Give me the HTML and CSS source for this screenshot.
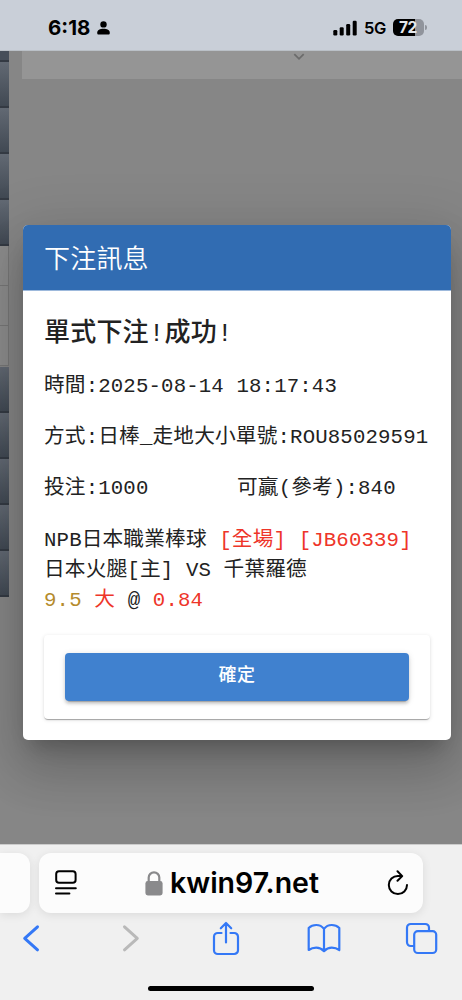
FILE: index.html
```html
<!DOCTYPE html>
<html lang="zh-Hant">
<head>
    <meta charset="UTF-8">
    <meta name="viewport" content="width=device-width, initial-scale=1.0">
    <title>下注訊息</title>
    <link rel="stylesheet" href="styles.css">
</head>
<body>
    <div class="status-bar">
        <div class="status-left">
            <span class="time">6:18</span>
            <svg width="13" height="14" viewBox="0 0 13 14">
                <circle cx="6.5" cy="3.4" r="3.2" />
                <path d="M0.2 11.7C0.2 9.3 3 7.8 6.5 7.8s6.3 1.5 6.3 3.9c0 1.4-.5 1.9-1.6 1.9H1.8C.7 13.6.2 13.1.2 11.7z" />
            </svg>
        </div>
        <div class="status-right">
            <svg class="signal" width="25" height="16" viewBox="0 0 25 16">
                <rect x="0.3" y="10" width="4" height="5.5" rx="1.2" />
                <rect x="6.7" y="7.3" width="4" height="8.2" rx="1.2" />
                <rect x="13.2" y="4" width="4" height="11.5" rx="1.2" />
                <rect x="19.7" y="0.7" width="4" height="14.8" rx="1.2" />
            </svg>
            <span class="network">5G</span>
            <div class="battery"><span>72</span></div>
        </div>
    </div>

    <div class="viewport">
        <div class="sidebar">
            <div class="menu first"></div>
            <div class="menu"></div>
            <div class="menu"></div>
            <div class="menu"></div>
            <div class="menu"></div>
            <div class="sub"></div>
            <div class="sub"></div>
            <div class="sub"></div>
            <div class="menu"></div>
            <div class="menu"></div>
            <div class="menu"></div>
            <div class="menu"></div>
            <div class="menu"></div>
        </div>
        <div class="panel">
            <svg width="12" height="8" viewBox="0 0 12 8"><path d="M1.3 1.2 6 5.8l4.7-4.6" fill="none" stroke="#6c6c6c" stroke-width="1.8" /></svg>
        </div>

        <div class="overlay">
            <div class="dialog">
                <div class="dialog-title">下注訊息</div>
                <div class="dialog-body">
                    <h1>單式下注!成功!</h1>
                    <p>時間:2025-08-14 18:17:43</p>
                    <p>方式:日棒_走地大小單號:ROU85029591</p>
                    <p class="split"><span>投注:1000</span><span>可贏(參考):840</span></p>
                    <p>NPB日本職業棒球 <span class="red">[全場] [JB60339]</span><br>
                    日本火腿[主] VS 千葉羅德<br>
                    <span class="gold">9.5</span> <span class="red">大</span> @ <span class="red">0.84</span></p>
                    <div class="actions">
                        <button class="btn">確定</button>
                    </div>
                </div>
            </div>
        </div>
    </div>

    <div class="browser-bar">
        <div class="tabs">
            <div class="tab-prev"></div>
            <div class="address">
                <svg width="22" height="26" viewBox="0 0 22 26" fill="none" stroke="#000" stroke-width="2" stroke-linecap="round">
                    <rect x="1.2" y="1.2" width="19.4" height="11.6" rx="2.8" />
                    <path d="M1 18.2h19.8M1 23.6h13.4" />
                </svg>
                <div class="host">
                    <svg width="18" height="25" viewBox="0 0 18 25">
                        <path d="M3.7 11V6.6a5.3 5.3 0 0 1 10.6 0V11" fill="none" stroke="#8a8a8c" stroke-width="2.2" />
                        <rect x="0.4" y="10" width="17.2" height="14.4" rx="2.4" fill="#8a8a8c" />
                    </svg>
                    <span>kwin97.net</span>
                </div>
                <svg width="22" height="26" viewBox="0 0 22 26" fill="none" stroke="#000" stroke-width="2" stroke-linecap="round" stroke-linejoin="round">
                    <path d="M20 15A9.1 9.1 0 1 1 10.9 5.9H14.7M10.5 1.3l4.7 4.8-4.7 4.7" />
                </svg>
            </div>
        </div>
        <div class="toolbar">
            <svg width="18" height="28" viewBox="0 0 18 28"><path d="M15.5 2.8 2.7 14.3l12.8 11.5" /></svg>
            <svg class="disabled" width="18" height="28" viewBox="0 0 18 28"><path d="M2.5 2.8 15.3 14.3 2.5 25.8" /></svg>
            <svg width="28" height="35" viewBox="0 0 28 35"><path d="M9.5 12H5.8A3.8 3.8 0 0 0 2 15.8v13.4A3.8 3.8 0 0 0 5.8 33h16.4a3.8 3.8 0 0 0 3.8-3.8V15.8a3.8 3.8 0 0 0-3.8-3.8h-3.7M14 21.5V2.2M8.8 7.3 14 2l5.2 5.3" /></svg>
            <svg width="34" height="30" viewBox="0 0 34 30"><path d="M17 5.8v22.3M17 5.8C15 3.2 12.3 2 9.2 2S3.6 3.1 1.7 5v22c2-1.4 4.7-2.3 7.5-2.3s5.6 1.2 7.8 3.4c2.2-2.2 5-3.4 7.8-3.4s5.5.9 7.500 2.300V5c-1.900-1.900-4.400-3-7.500-3S19 3.200 17 5.800z" /></svg>
            <svg width="33" height="33" viewBox="0 0 33 33"><rect x="9.2" y="9.2" width="22" height="21.8" rx="3.6" /><path d="M9 24H5.7A3.7 3.7 0 0 1 2 20.3V5.7A3.7 3.7 0 0 1 5.7 2h14.6A3.7 3.7 0 0 1 24 5.7V9" /></svg>
        </div>
        <div class="home-indicator"></div>
    </div>
</body>
</html>
```

FILE: styles.css
```css
* {
    margin: 0;
    padding: 0;
    box-sizing: border-box;
}

body {
    height: 1000px;
    display: flex;
    flex-direction: column;
    overflow: hidden;
    font-family: Inter, sans-serif;
    background-color: #868686;
}

svg {
    display: block;
    flex-shrink: 0;
}

/* Status bar */
.status-bar {
    height: 51px;
    flex-shrink: 0;
    display: flex;
    justify-content: space-between;
    padding: 18px 38px 0 48px;
    background-color: #c9cfd8;
    border-bottom: 1px solid #bac0c7;
}

.status-left,
.status-right {
    display: flex;
    align-items: center;
    height: 19px;
}

.time {
    font-size: 20.5px;
    font-weight: 700;
    line-height: 19px;
    margin-right: 7px;
}

.signal {
    margin-right: 6px;
}

.network {
    width: 24px;
    margin-right: 5px;
    font-size: 16.5px;
    font-weight: 600;
    letter-spacing: -0.3px;
}

.battery {
    position: relative;
    width: 31px;
    height: 17px;
    padding-right: 1px;
    border-radius: 5px;
    background: linear-gradient(to right, #000 72%, #90949c 72%);
    color: #e3e7ec;
    font-size: 15.5px;
    font-weight: 700;
    line-height: 17px;
    letter-spacing: -0.5px;
    text-align: center;
}

.battery::after {
    content: "";
    position: absolute;
    right: -3px;
    top: 6px;
    width: 2px;
    height: 5px;
    border-radius: 0 2px 2px 0;
    background-color: #90949c;
}

/* Page behind the dialog */
.viewport {
    position: relative;
    flex: 1;
    display: flex;
    overflow: hidden;
}

.sidebar {
    width: 9px;
    margin-right: 13px;
}

.menu {
    height: 46px;
    background: linear-gradient(#626973, #414953);
    border-bottom: 2px solid #343a43;
}

.menu.first {
    height: 11px;
    background: #464e59;
}

.sub {
    height: 40px;
    background-color: #8c8c8c;
    border-right: 1px solid #777;
    border-bottom: 1px solid #777;
}

.sub + .menu {
    margin-top: 1px;
}

.panel {
    flex: 1;
    height: 28px;
    padding: 2px 0 0 271px;
    background-color: #959595;
}

/* Dialog */
.overlay {
    position: absolute;
    inset: 0;
    padding: 174px 11.5px 0 23px;
}

.dialog {
    height: 515px;
    border-radius: 5px;
    overflow: hidden;
    background-color: #fff;
    color: #222;
    box-shadow: 0 14px 19px -9px rgba(0, 0, 0, 0.2), 0 30px 48px 4px rgba(0, 0, 0, 0.14), 0 11px 58px 10px rgba(0, 0, 0, 0.12);
    font-family: "Liberation Mono", "Noto Sans CJK TC", monospace;
}

.dialog-title {
    height: 66px;
    padding: 4px 0 0 21px;
    background-color: #316cb2;
    border-bottom: 1px solid #9db9dc;
    color: #fff;
    font-size: 26px;
    font-weight: 350;
    line-height: 65px;
    letter-spacing: 0.2px;
}

.dialog-body {
    padding: 26px 20.5px 0 21px;
}

h1 {
    height: 34px;
    margin-bottom: 21px;
    font-size: 26px;
    font-weight: 500;
    line-height: 34px;
    letter-spacing: 0.2px;
}

p {
    margin-bottom: 21px;
    font-size: 20.7px;
    line-height: 30.2px;
    letter-spacing: 0.15px;
    white-space: nowrap;
}

p:last-of-type {
    margin-bottom: 18.9px;
}

.split {
    display: grid;
    grid-template-columns: 1fr 1fr;
}

.red {
    color: #ee3529;
}

.gold {
    color: #b58b2c;
}

.actions {
    height: 84px;
    padding: 18px 21px;
    border-radius: 4px;
    box-shadow: 0 2px 1px -1px rgba(0, 0, 0, 0.2), 0 1px 1px rgba(0, 0, 0, 0.14), 0 1px 4px rgba(0, 0, 0, 0.12);
}

.btn {
    display: block;
    width: 100%;
    height: 47.5px;
    padding-bottom: 7px;
    border: 0;
    border-radius: 4px;
    background-color: #4081cf;
    color: #fff;
    font-family: "Noto Sans CJK TC", sans-serif;
    font-size: 18px;
    font-weight: 500;
    letter-spacing: 0.5px;
    box-shadow: 0 4px 1px -3px rgba(0, 0, 0, 0.2), 0 3px 3px rgba(0, 0, 0, 0.14), 0 1px 6px rgba(0, 0, 0, 0.12);
}

/* Browser controls */
.browser-bar {
    height: 156px;
    flex-shrink: 0;
    padding-top: 8px;
    background-color: #f0f0f0;
    border-top: 1px solid #ccc;
}

.tabs {
    display: flex;
    gap: 9px;
    height: 60px;
}

.tab-prev {
    width: 30px;
    border-radius: 0 12px 12px 0;
    background-color: #fcfcfc;
    box-shadow: 0 2px 10px rgba(0, 0, 0, 0.09);
}

.address {
    width: 384px;
    display: flex;
    align-items: center;
    justify-content: space-between;
    padding: 0 14px 0 16px;
    border-radius: 12px;
    background-color: #fcfcfc;
    box-shadow: 0 2px 10px rgba(0, 0, 0, 0.09);
}

.host {
    display: flex;
    align-items: center;
    gap: 7px;
    font-size: 28.5px;
    font-weight: 600;
    line-height: 34px;
}

.toolbar {
    display: grid;
    grid-template-columns: repeat(5, 97.5px);
    align-items: center;
    justify-content: center;
    justify-items: center;
    height: 50px;
    padding-right: 10px;
}

.toolbar svg {
    fill: none;
    stroke: #3478f6;
    stroke-width: 2.2;
    stroke-linecap: round;
    stroke-linejoin: round;
}

.toolbar svg:nth-child(-n+2) {
    stroke-width: 3;
}

.toolbar .disabled {
    stroke: #b9b9b9;
    margin-left: 5px;
}

.home-indicator {
    width: 166px;
    height: 5px;
    margin: 23px auto 0;
    border-radius: 3px;
    background-color: #000;
}
```
